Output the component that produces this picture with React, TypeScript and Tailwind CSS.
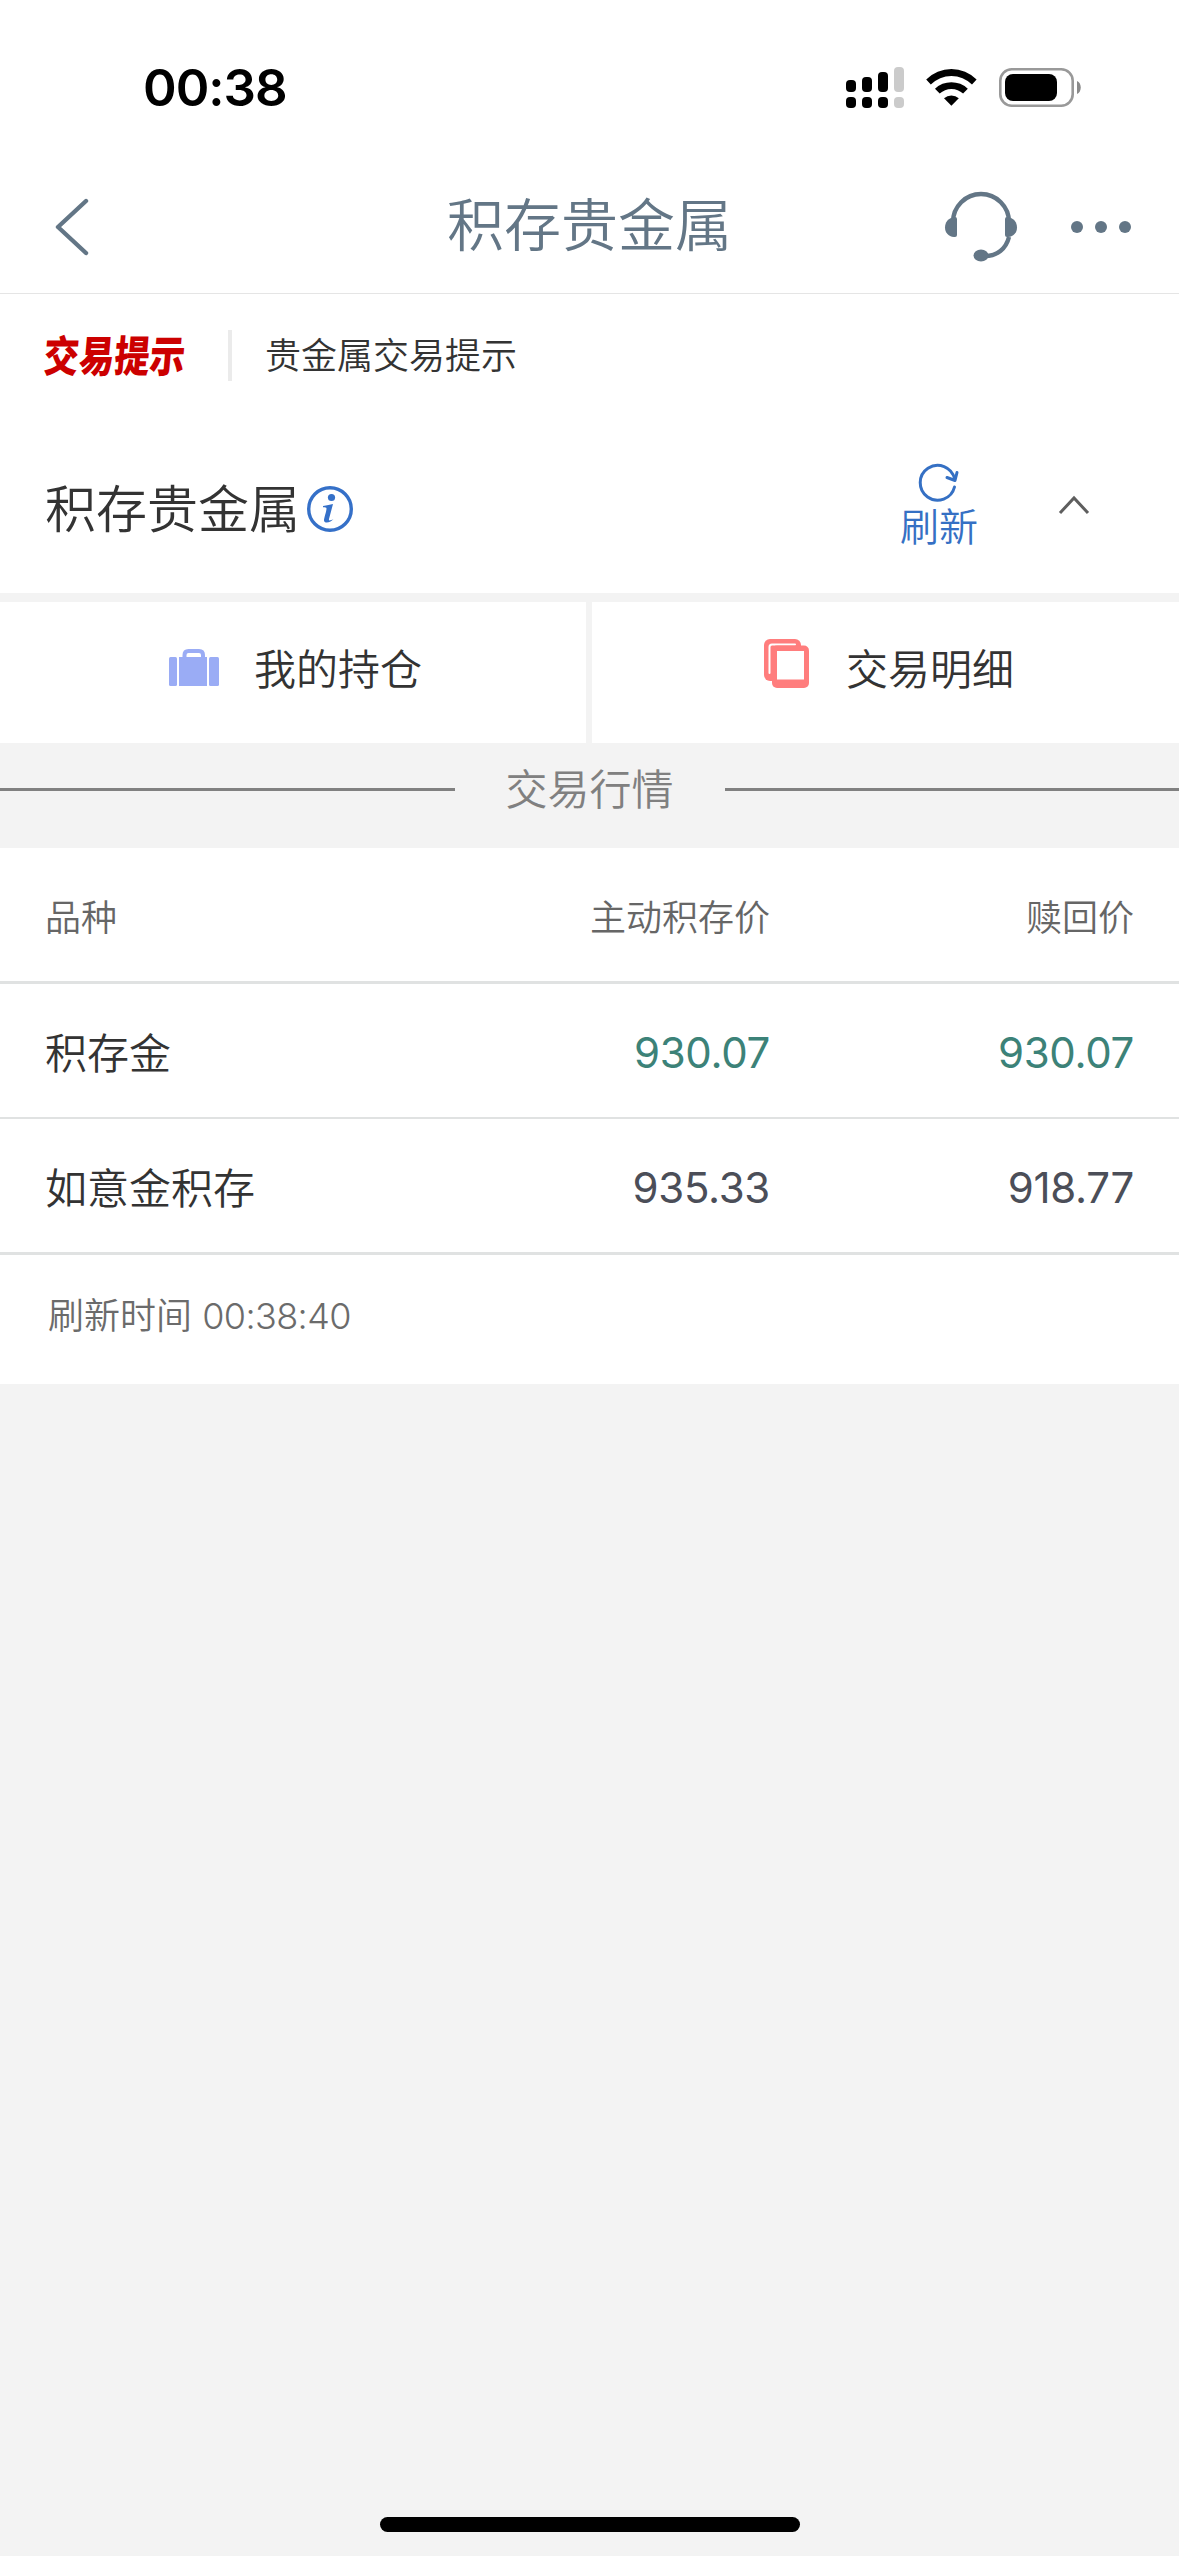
import type { ReactNode } from "react"

type Quote = {
  name: string
  buy: string
  redeem: string
  color: string
}

const quotes: Quote[] = [
  { name: "积存金", buy: "930.07", redeem: "930.07", color: "text-[#3c8278]" },
  { name: "如意金积存", buy: "935.33", redeem: "918.77", color: "text-[#4b4e58]" },
]

function StatusBar() {
  return (
    <div className="h-[174px] flex items-start justify-between pl-[143px] pr-[98px] text-black">
      <span className="mt-[57px] text-[51px] leading-[62px] font-semibold tracking-[-1px]">00:38</span>
      <svg className="mt-[60px]" width="235" height="56" viewBox="0 0 235 56">
        <rect x="0" y="20" width="10" height="12" rx="4" />
        <rect x="16" y="17" width="10" height="15" rx="4" />
        <rect x="32" y="12" width="10" height="20" rx="4" />
        <rect x="48" y="7" width="10" height="25" rx="4" fill="#cbcbcb" />
        <rect x="0" y="37" width="10" height="11" rx="4" />
        <rect x="16" y="37" width="10" height="11" rx="4" />
        <rect x="32" y="37" width="10" height="11" rx="4" />
        <rect x="48" y="37" width="10" height="11" rx="4" fill="#cbcbcb" />
        <path d="M80.2 19.6a35.5 35.5 0 0 1 50.4 0l-4.6 5a29 29 0 0 0-41.2 0z" />
        <path d="M89 28.8a23.5 23.5 0 0 1 32.8 0l-4.7 4.8a17 17 0 0 0-23.4 0z" />
        <path d="M98 38.2a11.5 11.5 0 0 1 14.8 0l-7.4 7.6z" />
        <rect x="154.3" y="9.3" width="72.4" height="36.4" rx="11.5" fill="none" stroke="#999" strokeWidth="2.6" />
        <rect x="159" y="14" width="52" height="27" rx="8" />
        <path d="M231 21c5 2 5 11 0 13z" fill="#8a8a8a" />
      </svg>
    </div>
  )
}

function NavBar() {
  return (
    <div className="h-[120px] grid grid-cols-[1fr_auto_1fr] border-b border-[#e5e5e5] text-[#637686]">
      <svg className="ml-[52px] mt-[19px]" width="40" height="68" viewBox="0 0 40 68" fill="none" stroke="currentColor" strokeWidth="4.4" strokeLinecap="round" strokeLinejoin="round">
        <path d="M34 8L6 34l28 26" />
      </svg>
      <h1 className="mt-[10px] text-[57px] leading-[84px] font-[350]">积存贵金属</h1>
      <div className="flex justify-end pr-[46px] pt-[14px]">
        <svg className="mr-[50px] mt-px" width="76" height="76" viewBox="0 0 76 76" fill="currentColor">
          <path d="M10 33a28 28 0 0 1 56 0" fill="none" stroke="currentColor" strokeWidth="4.4" />
          <path d="M66 48C63 60 54 67 42 67" fill="none" stroke="currentColor" strokeWidth="4.4" />
          <path d="M11 28h1q2 0 2 2v16q0 2-2 2h-1C-1 47-1 30 11 28z" />
          <path d="M65 28h-1q-2 0-2 2v16q0 2 2 2h1C77 47 77 30 65 28z" />
          <ellipse cx="38" cy="66.500" rx="7.500" ry="6" />
        </svg>
        <svg className="mt-[29px]" width="64" height="20" viewBox="0 0 64 20" fill="currentColor">
          <circle cx="8" cy="10" r="6" />
          <circle cx="32" cy="10" r="6" />
          <circle cx="56" cy="10" r="6" />
        </svg>
      </div>
    </div>
  )
}

function NoticeRow() {
  return (
    <div className="h-[126px] flex items-start pt-[36px] pl-[44px]">
      <div className="w-[184px] pt-px">
        <span className="inline-block origin-left scale-x-[0.82] -skew-x-6 text-[43px] leading-[50px] font-black text-[#cc0000] whitespace-nowrap">交易提示</span>
      </div>
      <div className="w-1 h-[51px] bg-[#ebebeb]" />
      <span className="ml-[33px] -mt-[1px] text-[36px] leading-[54px] font-[350]">贵金属交易提示</span>
    </div>
  )
}

function TitleRow() {
  return (
    <div className="h-[173px] flex items-start pl-[45px] pr-[89px]">
      <h2 className="mt-[52px] text-[51px] leading-[76px] font-[350]">积存贵金属</h2>
      <svg className="ml-[6px] mt-[64px]" width="48" height="50" viewBox="0 0 48 50">
        <circle cx="24" cy="25" r="21.300" fill="none" stroke="#3570c8" strokeWidth="3.400" />
        <circle cx="25.500" cy="13.500" r="3.600" fill="#3570c8" />
        <path d="M17 22c4-1 7-1 10-2l-4 15c-.4 1.800.8 2 4.500 0-2 3-9 5.500-9.500 1.500-.2-2 2.500-9 2.500-12 0-1.200-1.500-1.200-3.500-1.200z" fill="#3570c8" />
      </svg>
      <div className="ml-auto mt-[40px] flex flex-col items-center text-[#3570c4]">
        <svg width="44" height="44" viewBox="0 0 44 44" fill="none" stroke="currentColor" strokeWidth="3" strokeLinecap="round" strokeLinejoin="round">
          <path d="M37.500 27A17.400 17.400 0 1 1 37.600 19" />
          <path d="M30 17.500l8 3 2-8" />
        </svg>
        <span className="-mt-[5px] text-[39px] leading-[56px] font-[350]">刷新</span>
      </div>
      <svg className="ml-[80px] mt-[73px]" width="32" height="24" viewBox="0 0 32 24" fill="none" stroke="#5e5e5e" strokeWidth="3">
        <path d="M2 20L16 5l14 15" />
      </svg>
    </div>
  )
}

function Entry({ icon, label }: { icon: ReactNode; label: string }) {
  return (
    <div className="bg-white flex items-start">
      {icon}
      <span className="mt-[37px] text-[42px] leading-[62px] font-[350]">{label}</span>
    </div>
  )
}

function Entries() {
  return (
    <div className="h-[141px] grid grid-cols-[586px_1fr] gap-[6px]">
      <Entry
        label="我的持仓"
        icon={
          <svg className="ml-[169px] mr-[35px] mt-[45px]" width="50" height="40" viewBox="0 0 50 40" fill="#9aacf5">
            <rect x="0" y="10" width="8" height="29" rx="1.500" />
            <rect x="10" y="10" width="28" height="29" />
            <rect x="40" y="10" width="10" height="29" rx="1.500" />
            <path d="M15.500 11V8q0-4 4-4h10.500q4 0 4 4v3" fill="none" stroke="#9aacf5" strokeWidth="4" />
          </svg>
        }
      />
      <Entry
        label="交易明细"
        icon={
          <svg className="ml-[172px] mr-[37px] mt-[37px]" width="45" height="49" viewBox="0 0 45 49">
            <rect width="37" height="42" rx="6" fill="#ff7d7d" />
            <path d="M5.500 34V8q0-2.500 2.500-2.500h23" fill="none" stroke="#fff" strokeWidth="2" strokeLinecap="round" />
            <rect x="8" y="6.500" width="37" height="42.500" rx="5" fill="#ff7d7d" />
            <rect x="13" y="12" width="27" height="28.500" fill="#fff" />
          </svg>
        }
      />
    </div>
  )
}

function QuoteTable() {
  return (
    <div className="bg-white">
      <div className="h-[136px] grid grid-cols-[400px_325px_1fr] items-center pt-[6px] px-[45px] border-b-[3px] border-[#e0e2e2] text-[36px] font-[350] text-[#666]">
        <span>品种</span>
        <span className="text-right">主动积存价</span>
        <span className="text-right">赎回价</span>
      </div>
      {quotes.map((q) => (
        <div key={q.name} className="h-[135px] last:h-[136px] grid grid-cols-[400px_325px_1fr] items-center pt-[5px] px-[45px] border-b-2 last:border-b-[3px] border-[#e0e2e2] text-[42px]">
          <span className="font-[350]">{q.name}</span>
          <span className={`-mt-[2px] text-right font-normal tracking-[-0.3px] ${q.color}`}>{q.buy}</span>
          <span className={`-mt-[2px] text-right font-normal tracking-[-0.3px] ${q.color}`}>{q.redeem}</span>
        </div>
      ))}
    </div>
  )
}

export default function App() {
  return (
    <main className="w-[1179px] h-[2556px] flex flex-col bg-[#f3f3f3] text-[#333] font-['Inter','Noto_Sans_CJK_SC',sans-serif]">
      <div className="bg-white">
        <StatusBar />
        <NavBar />
        <NoticeRow />
        <TitleRow />
      </div>

      <div className="mt-[9px]">
        <Entries />
      </div>

      <div className="h-[105px] flex items-start text-[#808080]">
        <div className="mt-[45px] h-[3px] flex-1 bg-[#808080]" />
        <span className="mx-[51px] mt-[16px] text-[42px] leading-[62px] font-[350]">交易行情</span>
        <div className="mt-[45px] h-[3px] flex-1 bg-[#808080]" />
      </div>

      <QuoteTable />
      <div className="h-[129px] bg-white flex items-center pl-[48px] text-[36px] font-[350] text-[#6b6b6b]">
        <span className="-mt-[7px]">刷新时间 <span className="tracking-[-0.6px]">00:38:40</span></span>
      </div>

      <div className="mt-auto mb-6 mx-auto w-[420px] h-[15px] rounded-full bg-black" />
    </main>
  )
}
